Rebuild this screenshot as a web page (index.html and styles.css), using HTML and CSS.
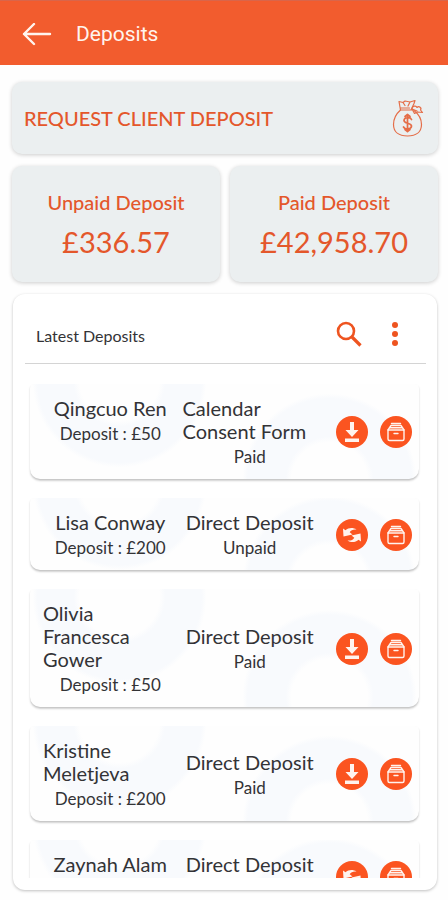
FILE: index.html
```html
<!DOCTYPE html>
<html lang="en">
<head>
<meta charset="utf-8">
<meta name="viewport" content="width=device-width, initial-scale=1">
<title>Deposits</title>
<link rel="stylesheet" href="styles.css">
</head>
<body>
<svg class="sprite" aria-hidden="true">
  <symbol id="download" viewBox="0 0 32 32">
    <path d="M14 6h4v8h4.500L16 21 9.500 14H14z" fill="currentColor"/>
    <path d="M9 22.500h14v3.500H9z" fill="currentColor"/>
  </symbol>
  <symbol id="resend" viewBox="0 0 32 32">
    <path d="M7 9.500l2.500 1.800C12.500 8.500 17 8.200 20.500 10.500c-3-.3-5.500.3-6.800 2.800l2.800 2.200L7.500 17.500z" fill="currentColor"/>
    <path d="M25 22.500l-2.500-1.800c-3 2.800-7.500 3.100-11 .8 3 .3 5.500-.3 6.800-2.800l-2.800-2.200 9-2z" fill="currentColor"/>
  </symbol>
  <symbol id="archive" viewBox="0 0 32 32">
    <g fill="none" stroke="currentColor" stroke-width="1.400" stroke-linejoin="round" stroke-linecap="round">
      <path d="M8 14h16v9q0 1.500-1.500 1.500h-13Q8 24.500 8 23z"/>
      <path d="M8 14l3-4.500h10l3 4.500M11.500 7.500h9M10.500 11.800h11M14 17.500h4"/>
    </g>
  </symbol>
</svg>

<header class="topbar">
  <button class="icon-button" type="button" aria-label="Back">
    <svg width="30" height="24" viewBox="0 0 30 24" fill="none" stroke="currentColor" stroke-width="2.400" stroke-linecap="round" stroke-linejoin="round"><path d="M28 11H2M12 1L2 11l10 10"/></svg>
  </button>
  <h1 class="topbar-title">Deposits</h1>
</header>

<main class="content">
  <button class="card request" type="button">
    <span>REQUEST CLIENT DEPOSIT</span>
    <svg width="32" height="38" viewBox="0 0 32 38" fill="none" stroke="currentColor" stroke-width="1.200" stroke-linejoin="round" stroke-linecap="round" opacity="0.850">
      <path d="M8.500 11C4 15 1.500 20 1.500 25.500 1.500 33 7 37 15.500 37S29.500 33 29.500 25.500c0-5.500-3-10.500-7.500-14"/>
      <path d="M8.500 11L7 2.500l4 1 2-1.500 5 1 5-1.500-1 3-3 6.500M8.500 11h11M8.500 9h9M11 3.500l2 3M18 3l-2 4"/>
      <path d="M20 10c0-3 4-4 5-1.500 2-2 5 .5 3.500 2.500l2 2.500-5-.5-3 1.500z M20 10l5 2"/>
      <path d="M19.500 20.500c-1-2.500-7.500-2.500-7.500 1s7.500 2 7.500 5.500-6.500 4-8 1M15.500 15.500v17M13 17.500l2.500-2 2.500 2M13 30.500l2.500 2 2.500-2" stroke-width="1.700"/>
    </svg>
  </button>

  <section class="stats">
    <div class="card stat"><h2 class="stat-label">Unpaid Deposit</h2><p class="stat-value">£336.57</p></div>
    <div class="card stat"><h2 class="stat-label">Paid Deposit</h2><p class="stat-value">£42,958.70</p></div>
  </section>

  <section class="panel">
    <div class="panel-head">
      <h2 class="panel-title">Latest Deposits</h2>
      <button class="icon-button" type="button" aria-label="Search">
        <svg width="28" height="28" viewBox="0 0 28 28" fill="none" stroke="currentColor"><circle cx="11" cy="11" r="8" stroke-width="2.600"/><path d="M17 17l8.500 8.500" stroke-width="3.200"/></svg>
      </button>
      <button class="icon-button" type="button" aria-label="More options">
        <svg width="28" height="28" viewBox="0 0 28 28" fill="currentColor"><circle cx="14" cy="5" r="3"/><circle cx="14" cy="14" r="3"/><circle cx="14" cy="23" r="3"/></svg>
      </button>
    </div>

    <ul class="list">
      <li class="item">
        <div class="who"><span class="main">Qingcuo Ren</span><span class="sub">Deposit : £50</span></div>
        <div class="what"><span class="main">Calendar Consent Form</span><span class="sub">Paid</span></div>
        <button class="action" type="button" aria-label="Download"><svg><use href="#download"/></svg></button>
        <button class="action" type="button" aria-label="Archive"><svg><use href="#archive"/></svg></button>
      </li>
      <li class="item">
        <div class="who"><span class="main">Lisa Conway</span><span class="sub">Deposit : £200</span></div>
        <div class="what"><span class="main">Direct Deposit</span><span class="sub">Unpaid</span></div>
        <button class="action" type="button" aria-label="Resend"><svg><use href="#resend"/></svg></button>
        <button class="action" type="button" aria-label="Archive"><svg><use href="#archive"/></svg></button>
      </li>
      <li class="item">
        <div class="who"><span class="main">Olivia Francesca Gower</span><span class="sub">Deposit : £50</span></div>
        <div class="what"><span class="main">Direct Deposit</span><span class="sub">Paid</span></div>
        <button class="action" type="button" aria-label="Download"><svg><use href="#download"/></svg></button>
        <button class="action" type="button" aria-label="Archive"><svg><use href="#archive"/></svg></button>
      </li>
      <li class="item">
        <div class="who"><span class="main">Kristine Meletjeva</span><span class="sub">Deposit : £200</span></div>
        <div class="what"><span class="main">Direct Deposit</span><span class="sub">Paid</span></div>
        <button class="action" type="button" aria-label="Download"><svg><use href="#download"/></svg></button>
        <button class="action" type="button" aria-label="Archive"><svg><use href="#archive"/></svg></button>
      </li>
      <li class="item">
        <div class="who"><span class="main">Zaynah Alam</span><span class="sub">Deposit : £200</span></div>
        <div class="what"><span class="main">Direct Deposit</span><span class="sub">Unpaid</span></div>
        <button class="action" type="button" aria-label="Resend"><svg><use href="#resend"/></svg></button>
        <button class="action" type="button" aria-label="Archive"><svg><use href="#archive"/></svg></button>
      </li>
    </ul>
  </section>
</main>
</body>
</html>
```
FILE: styles.css
```css
* { box-sizing: border-box; margin: 0; padding: 0; }

body {
  display: flex;
  flex-direction: column;
  height: 100vh;
  background: #fefefe;
  color: #333336;
  font-family: Lato, "Liberation Sans", sans-serif;
}

button { border: 0; background: none; font: inherit; color: inherit; cursor: pointer; }
svg { display: block; }
.sprite { position: absolute; width: 0; height: 0; }
.icon-button { flex: none; color: #ee5420; }

.topbar {
  flex: none;
  display: flex;
  align-items: center;
  gap: 24px;
  padding: 20px 22px 17px;
  border-top: 1px solid #d9654a;
  background: #f25c2e;
  color: #fff4ee;
}
.topbar .icon-button { color: inherit; }
.topbar-title { font: 400 21px/27px Roboto, sans-serif; }

.content {
  flex: 1;
  min-height: 0;
  display: flex;
  flex-direction: column;
  gap: 12px;
  padding: 17px 10px 10px 12px;
}

.card {
  border-radius: 10px;
  background: #ebeff0;
  color: #e4572b;
  box-shadow: 0 1px 4px rgba(0, 0, 0, 0.2);
}

.request {
  flex: none;
  display: flex;
  align-items: center;
  justify-content: space-between;
  padding: 17px 14px 17px 12px;
  font-size: 20px;
  font-weight: 500;
}

.stats { flex: none; display: grid; grid-template-columns: 1fr 1fr; gap: 10px; }
.stat { padding: 23px 8px 19px; text-align: center; }
.stat-label { font-size: 20px; line-height: 26px; font-weight: 500; }
.stat-value { margin-top: 6px; font-size: 29px; line-height: 42px; }

.panel {
  flex: 1;
  min-height: 0;
  display: flex;
  flex-direction: column;
  margin: 0 1px;
  padding: 0 11px 12px 12px;
  border-radius: 12px;
  background: #fff;
  box-shadow: 0 1px 3px rgba(0, 0, 0, 0.25);
}
.panel-head {
  flex: none;
  display: flex;
  align-items: center;
  gap: 18px;
  padding: 26px 17px 15px 11px;
  border-bottom: 1px solid #d4d4d4;
}
.panel-title { flex: 1; padding-top: 4px; font-size: 16px; line-height: 24px; font-weight: 400; }

.list {
  flex: 1;
  min-height: 0;
  display: flex;
  flex-direction: column;
  gap: 19px;
  margin-top: 20px;
  padding: 0 7px 0 5px;
  overflow-y: auto;
  scrollbar-width: none;
  list-style: none;
}

.item {
  flex: none;
  display: grid;
  grid-template-columns: 1fr 1fr 32px 32px;
  column-gap: 12px;
  align-items: center;
  padding: 13px 7px 8px 13px;
  border-radius: 4px 4px 10px 10px;
  background:
    radial-gradient(circle at 23% calc(50% - 51px), transparent 40px, #f8fafd 46px, #f8fafd 82px, transparent 87px),
    radial-gradient(circle at 77% calc(50% + 49px), transparent 38px, #f8fafd 44px, #f8fafd 82px, transparent 87px),
    #fefefe;
  box-shadow: 0 2px 2px rgba(0, 0, 0, 0.18), 0 1px 1px rgba(0, 0, 0, 0.06);
}
.who, .what { display: flex; flex-direction: column; align-items: center; }
.who { align-self: start; }
.what { margin: 0 7px 0 -7px; }
.main { font-size: 20px; line-height: 23px; }
.sub { font-size: 17px; line-height: 28px; }

.action {
  width: 32px;
  height: 32px;
  margin-bottom: 4px;
  border-radius: 50%;
  background: #fb5420;
  color: #fff3ee;
}
.action svg { width: 32px; height: 32px; }
```
